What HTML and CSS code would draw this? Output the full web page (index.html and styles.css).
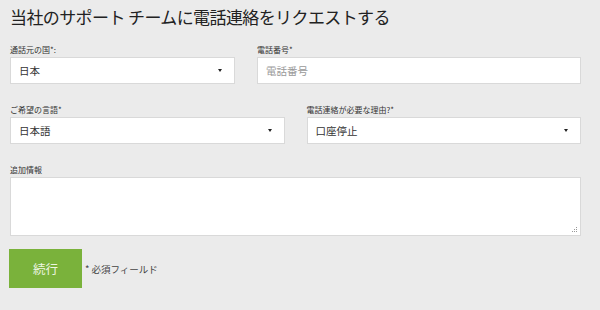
FILE: index.html
```html
<!DOCTYPE html>
<html lang="ja">
<head>
<meta charset="utf-8">
<link rel="stylesheet" href="styles.css">
</head>
<body>
<main class="page">
  <h1 class="title">当社のサポート チームに電話連絡をリクエストする</h1>
  <form class="form">
    <div class="row row-first">
      <div class="field field-country">
        <label class="label">通話元の国*:</label>
        <div class="select"><span class="value">日本</span><span class="caret"></span></div>
      </div>
      <div class="field field-phone">
        <label class="label">電話番号*</label>
        <div class="input"><span class="placeholder">電話番号</span></div>
      </div>
    </div>
    <div class="row row-second">
      <div class="field field-half">
        <label class="label">ご希望の言語*</label>
        <div class="select"><span class="value">日本語</span><span class="caret"></span></div>
      </div>
      <div class="field field-half">
        <label class="label">電話連絡が必要な理由?*</label>
        <div class="select"><span class="value">口座停止</span><span class="caret"></span></div>
      </div>
    </div>
    <div class="row row-third">
      <div class="field field-full">
        <label class="label">追加情報</label>
        <div class="textarea-wrap">
          <textarea class="textarea"></textarea>
          <span class="grip"></span>
        </div>
      </div>
    </div>
    <div class="actions">
      <button type="button" class="btn">続行</button>
      <span class="required">* 必須フィールド</span>
    </div>
  </form>
</main>
</body>
</html>
```
FILE: styles.css
```css
html, body {
  margin: 0;
  padding: 0;
  background: #ebebeb;
}
body {
  font-family: "Noto Sans CJK JP", "Noto Sans", sans-serif;
  color: #222;
}
.page {
  padding: 0 19px 0 10px;
}
.title {
  margin: 0;
  padding-top: 6px;
  font-size: 17px;
  line-height: 22px;
  font-weight: normal;
  color: #222;
  letter-spacing: -0.6px;
}
.form {
  margin: 0;
}
.row {
  display: flex;
  gap: 22px;
}
.row-first { margin-top: 17px; }
.row-second { margin-top: 21px; }
.row-third { margin-top: 21px; }
.field {
  display: flex;
  flex-direction: column;
}
.field-country { width: 225px; }
.field-phone { flex: 1; }
.field-half { flex: 1; }
.field-full { flex: 1; }
.label {
  font-size: 8px;
  line-height: 10px;
  height: 10px;
  margin-bottom: 2px;
  color: #333;
}
.select, .input {
  box-sizing: border-box;
  height: 27px;
  background: #fff;
  border: 1px solid #d9d9d9;
  display: flex;
  align-items: center;
  padding: 0 12px 0 8px;
  font-size: 10.5px;
  color: #333;
}
.select .value { flex: 1; }
.placeholder { color: #999; }
.caret {
  width: 0;
  height: 0;
  border-left: 2.5px solid transparent;
  border-right: 2.5px solid transparent;
  border-top: 3px solid #222;
}
.textarea-wrap {
  position: relative;
}
.textarea {
  box-sizing: border-box;
  display: block;
  width: 100%;
  height: 59px;
  margin: 0;
  background: #fff;
  border: 1px solid #d9d9d9;
  border-radius: 0;
  font-family: inherit;
  outline: none;
  resize: none;
}
.grip {
  position: absolute;
  right: 4px;
  bottom: 4px;
  width: 1px;
  height: 1px;
  background: #999;
  box-shadow: -2px 0 #999, -4px 0 #999, 0 -2px #999, -2px -2px #999, 0 -4px #999;
}
.actions {
  margin-top: 13px;
  display: flex;
  align-items: center;
  gap: 3px;
}
.btn {
  width: 73px;
  height: 39px;
  border: 0;
  border-radius: 0;
  background: #7ab23b;
  color: #eef6e2;
  font-family: inherit;
  font-size: 12.5px;
  padding: 0;
  margin-left: -1px;
}
.required {
  font-size: 9.5px;
  color: #444;
}
```
